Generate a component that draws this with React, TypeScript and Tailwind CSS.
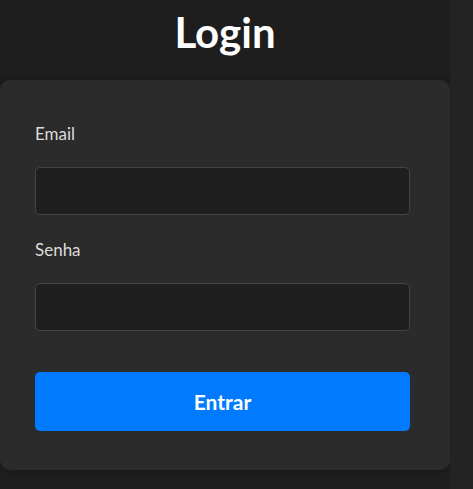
export default function App() {
    return (
        <div className="flex w-full h-[489px] overflow-hidden bg-[#1e1e1e] font-['Lato','Noto_Sans',sans-serif]">
            <div className="flex flex-col w-[450px] shrink-0">
                <h1 className="mt-[7px] h-[48px] text-center text-[42px] leading-[50px] font-bold text-white">
                    Login
                </h1>
                <div className="mt-[25px] w-[450px] h-[390px] rounded-[10px] bg-[#2b2b2b] pl-[35px] pr-[40px] pt-[42px] shadow-[0_0_6px_rgba(0,0,0,0.25)]">
                    <label className="block h-[24px] text-[17px] leading-[24px] text-[#dcdcdc]">Email</label>
                    <input type="text"
                        className="mt-[21px] block w-full h-[48px] rounded-[5px] border border-[#444] bg-[#1f1f1f] px-3 text-white outline-none" />
                    <label className="mt-[23px] block h-[24px] text-[17px] leading-[24px] text-[#dcdcdc]">Senha</label>
                    <input type="password"
                        className="mt-[21px] block w-full h-[48px] rounded-[5px] border border-[#444] bg-[#1f1f1f] px-3 text-white outline-none" />
                    <button className="mt-[41px] flex justify-center items-center w-full h-[59px] rounded-[5px] bg-[#007bff] text-[21px] font-bold text-white">
                        Entrar
                    </button>
                </div>
            </div>
            <div className="flex-1 bg-[#232323]"></div>
        </div>
    );
}
